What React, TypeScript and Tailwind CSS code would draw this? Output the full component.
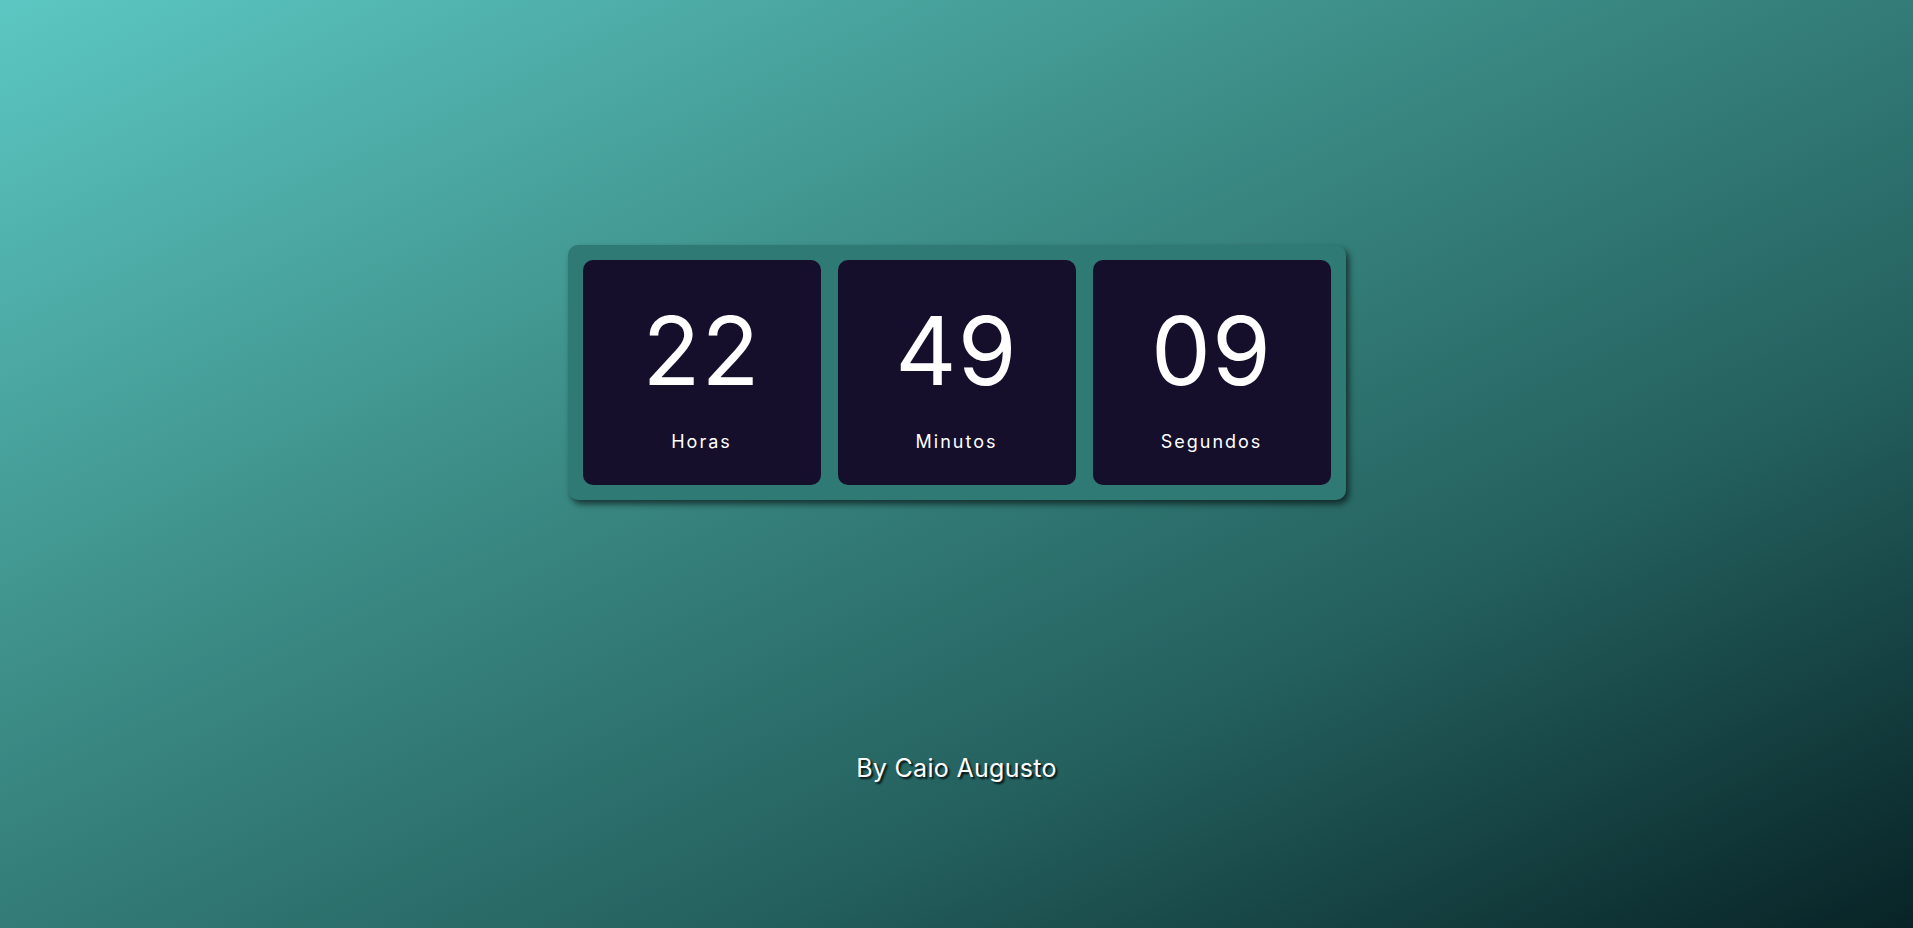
import React from "react";

const units = [
  { value: "22", label: "Horas" },
  { value: "49", label: "Minutos" },
  { value: "09", label: "Segundos" },
];

export default function App() {
  return (
    <div
      className="min-h-[928px] w-full flex flex-col items-center bg-[linear-gradient(to_bottom_right,#5cc7c2_0%,#3b8a84_40%,#235f5d_70%,#082326_100%)] text-white"
      style={{ fontFamily: "Inter, 'Noto Sans', sans-serif" }}
    >
      <div className="mt-[245px] flex gap-[17px] p-[15px] rounded-[10px] bg-[#2f7a75] shadow-[3px_4px_6px_rgba(0,0,0,0.6)]">
        {units.map((u) => (
          <div
            key={u.label}
            className="w-[238px] h-[225px] rounded-[10px] bg-[#150f2b] flex flex-col items-center"
          >
            <div className="mt-[40px] h-[100px] flex items-center text-[95px] font-normal leading-none tracking-[1px]">
              {u.value}
            </div>
            <div className="mt-[33px] text-[18px] tracking-[2px] leading-none">
              {u.label}
            </div>
          </div>
        ))}
      </div>
      <div className="mt-[250px] text-[25px] tracking-[0.3px] leading-[36px] [text-shadow:2px_2px_2px_rgba(0,0,0,0.85)]">
        By Caio Augusto
      </div>
    </div>
  );
}
